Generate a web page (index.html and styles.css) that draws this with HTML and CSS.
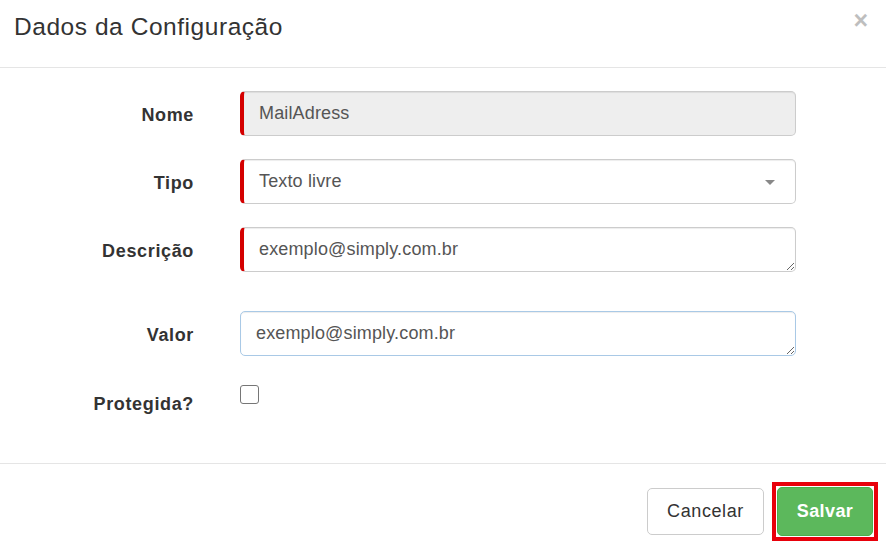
FILE: index.html
```html
<!DOCTYPE html>
<html lang="pt-BR">
<head>
<meta charset="utf-8">
<title>Dados da Configuração</title>
<link rel="stylesheet" href="styles.css">
</head>
<body>
<div class="modal">
  <div class="modal-header">
    <h4 class="modal-title">Dados da Configuração</h4>
    <span class="close">&times;</span>
  </div>
  <div class="modal-body">
    <div class="row">
      <label class="lbl">Nome</label>
      <div class="field"><input class="ctl req readonly" type="text" value="MailAdress" readonly></div>
    </div>
    <div class="row">
      <label class="lbl">Tipo</label>
      <div class="field"><div class="ctl req select">Texto livre<span class="caret"></span></div></div>
    </div>
    <div class="row">
      <label class="lbl">Descrição</label>
      <div class="field"><textarea class="ctl req area">exemplo@simply.com.br</textarea></div>
    </div>
    <div class="row row-valor">
      <label class="lbl">Valor</label>
      <div class="field"><textarea class="ctl area focus">exemplo@simply.com.br</textarea></div>
    </div>
    <div class="row row-check">
      <label class="lbl lbl-check">Protegida?</label>
      <div class="field"><span class="checkbox"></span></div>
    </div>
  </div>
  <div class="modal-footer">
    <button class="btn btn-default">Cancelar</button>
    <span class="highlight"><button class="btn btn-success">Salvar</button></span>
  </div>
</div>
</body>
</html>
```

FILE: styles.css
```css
html, body {
  margin: 0;
  padding: 0;
  background: #fff;
}
body {
  font-family: "Liberation Sans", Arial, sans-serif;
  color: #333;
  width: 886px;
  height: 546px;
  overflow: hidden;
}
.modal {
  display: flex;
  flex-direction: column;
}
.modal-header {
  height: 67px;
  border-bottom: 1.5px solid #e5e5e5;
  display: flex;
  justify-content: space-between;
  padding: 0 18px 0 14px;
}
.modal-title {
  margin: 12px 0 0 0;
  font-size: 24.5px;
  letter-spacing: 0.55px;
  font-weight: normal;
  line-height: 30px;
  color: #333;
}
.close {
  margin-top: 5px;
  font-size: 25px;
  font-weight: bold;
  color: #000;
  opacity: 0.25;
  line-height: 30px;
}
.modal-body {
  padding: 23px 0 0 0;
  height: 395px;
  box-sizing: border-box;
  display: flex;
  flex-direction: column;
  gap: 23px;
}
.row {
  display: grid;
  grid-template-columns: 194px 556px;
  column-gap: 46px;
  align-items: center;
}
.row-valor {
  margin-top: 16px;
}
.row-check {
  margin-top: 6px;
  align-items: start;
}
.lbl {
  text-align: right;
  font-weight: bold;
  font-size: 18px;
  letter-spacing: 0.65px;
  color: #333;
  padding-top: 4px;
}
.lbl-check {
  margin-top: 5px;
}
.field {
  display: flex;
}
.ctl {
  box-sizing: border-box;
  width: 556px;
  height: 45px;
  border: 1.25px solid #ccc;
  border-radius: 5px;
  font-family: "Liberation Sans", Arial, sans-serif;
  font-size: 18px;
  letter-spacing: 0.15px;
  color: #555;
  padding: 0 15px;
  background: #fff;
  margin: 0;
  outline: none;
  box-shadow: inset 0 1px 1px rgba(0,0,0,0.075);
}
.req {
  border-left: 4px solid #d40000;
}
.readonly {
  background: #eee;
}
.select {
  display: flex;
  align-items: center;
  position: relative;
}
.caret {
  position: absolute;
  right: 20px;
  top: 20px;
  width: 0;
  height: 0;
  border-left: 5px solid transparent;
  border-right: 5px solid transparent;
  border-top: 5px solid #888;
}
.area {
  resize: vertical;
  padding-top: 10px;
  line-height: 22px;
  overflow: hidden;
  display: block;
}
.focus {
  border-color: #a9c9e6;
}
.checkbox {
  display: block;
  box-sizing: border-box;
  width: 19px;
  height: 19px;
  border: 1.5px solid #767676;
  border-radius: 3px;
  margin-left: 0;
  background: #fff;
}
.modal-footer {
  border-top: 1.5px solid #e5e5e5;
  display: flex;
  justify-content: flex-end;
  align-items: flex-start;
  padding: 18px 8px 0 0;
  gap: 8px;
}
.btn {
  font-family: "Liberation Sans", Arial, sans-serif;
  font-size: 18px;
  letter-spacing: 0.6px;
  height: 47px;
  border-radius: 5px;
  border: 1.25px solid #ccc;
  background: #fff;
  color: #333;
  padding: 0;
  margin: 0;
}
.btn-default {
  width: 117px;
  margin-top: 6px;
}
.btn-success {
  background: #5cb85c;
  border-color: #4cae4c;
  color: #fff;
  font-weight: bold;
  letter-spacing: 0.4px;
  width: 96px;
  height: 49px;
}
.highlight {
  display: block;
  border: 4px solid #e8000b;
  padding: 1px;
  line-height: 0;
}
```
